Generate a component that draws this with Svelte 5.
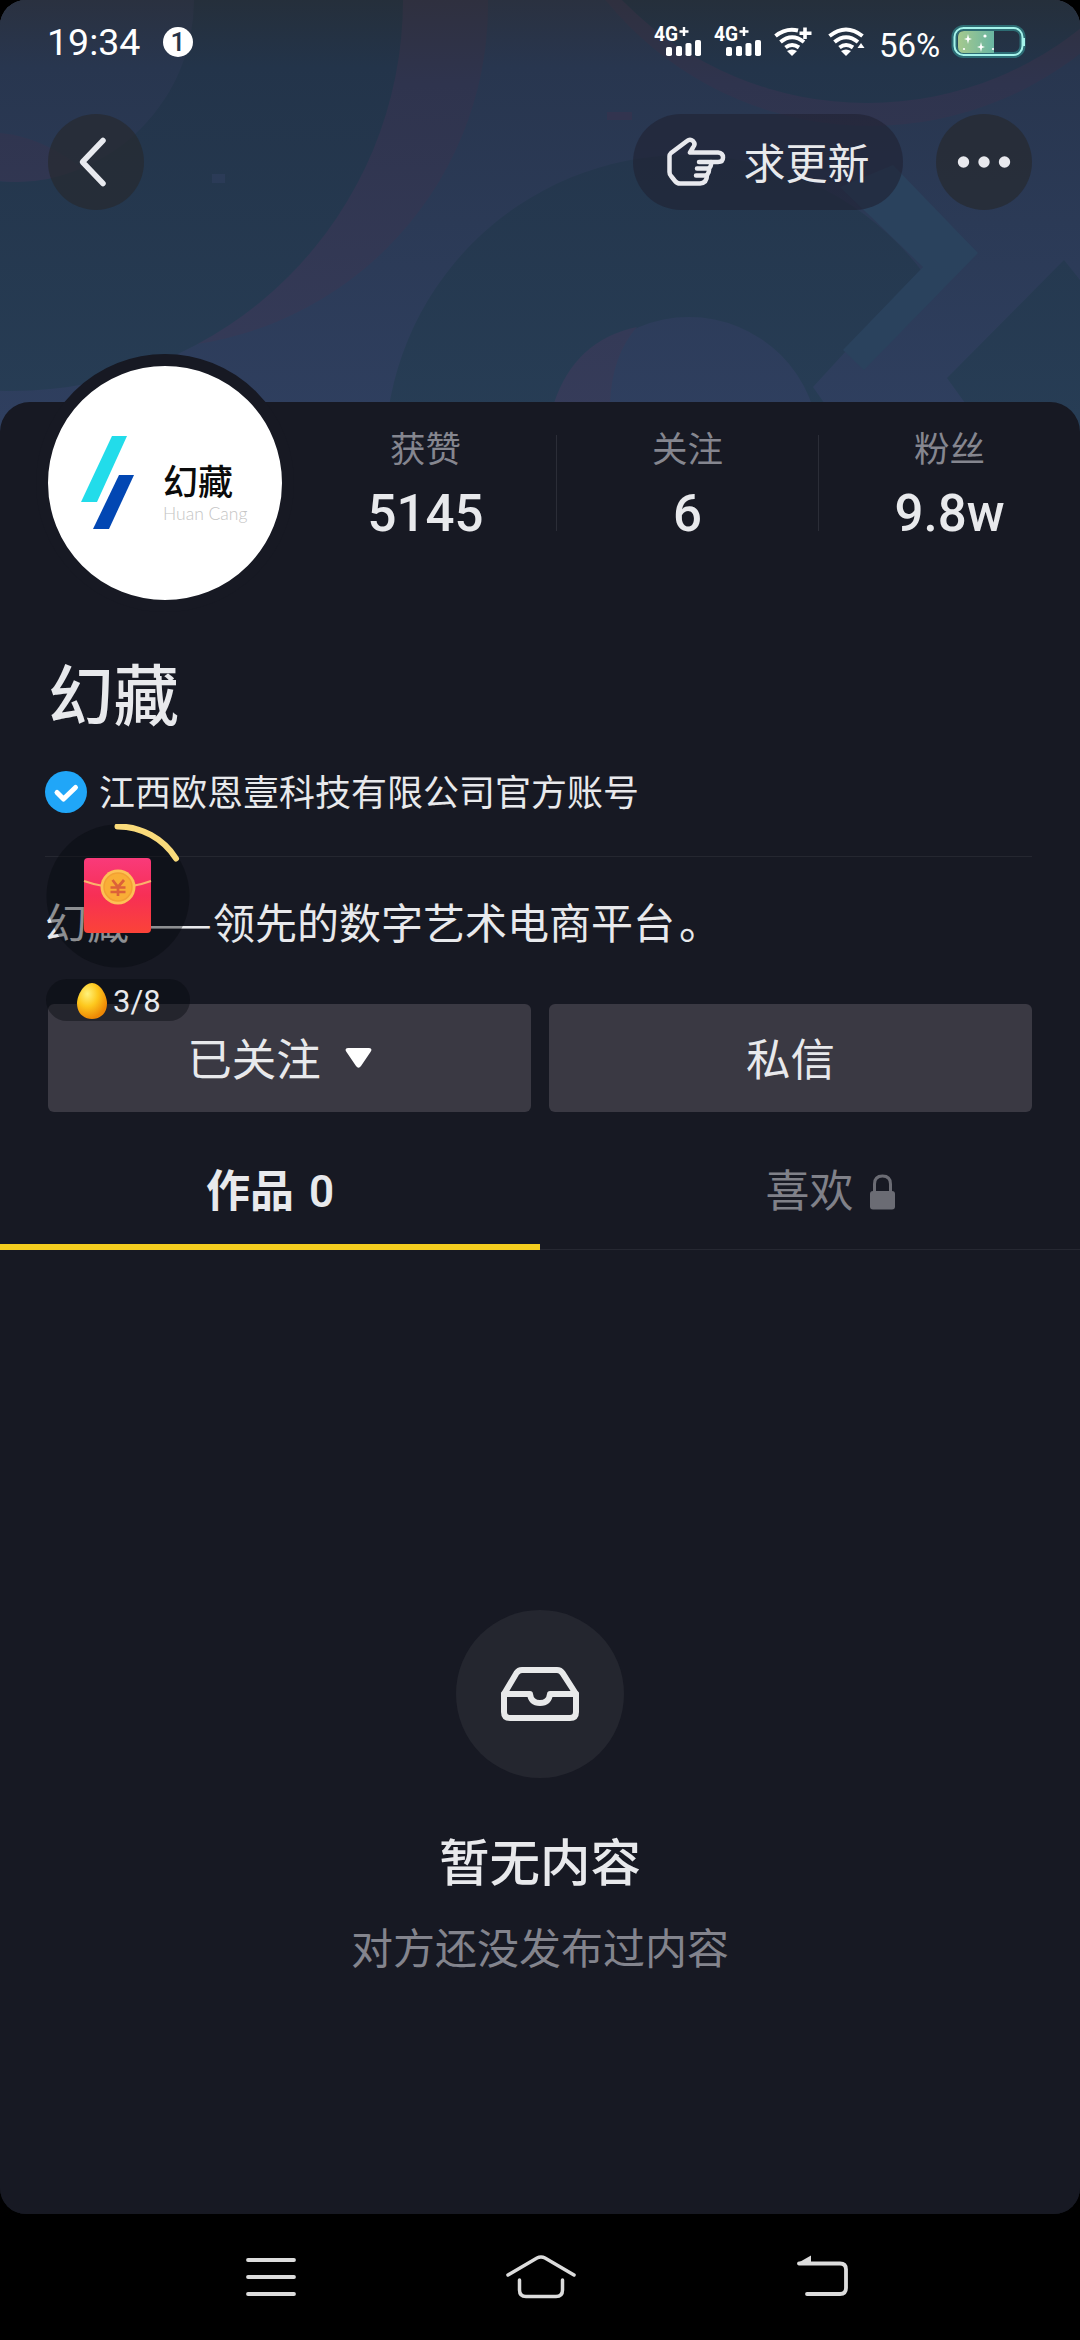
<script>
  const stats = [
    { label: '获赞', value: '5145' },
    { label: '关注', value: '6' },
    { label: '粉丝', value: '9.8w' }
  ];

  const signals = ['sim1', 'sim2'];
  const bars = [
    { x: 12, h: 9 },
    { x: 22, h: 10 },
    { x: 31.5, h: 13 },
    { x: 41, h: 16 }
  ];

  let activeTab = $state('works');
</script>

<div class="screen">
  <div class="app">
    <header class="cover">
      <svg class="cover-art" viewBox="0 0 1080 440" width="1080" height="440" aria-hidden="true">
        <defs>
          <linearGradient id="lightBlue" gradientUnits="userSpaceOnUse" x1="0" y1="0" x2="0" y2="420">
            <stop offset="0" stop-color="#2a3140" />
            <stop offset="0.16" stop-color="#28364f" />
            <stop offset="1" stop-color="#2f3f5f" />
          </linearGradient>
          <linearGradient id="deepBlue" gradientUnits="userSpaceOnUse" x1="0" y1="0" x2="0" y2="420">
            <stop offset="0" stop-color="#252f3b" />
            <stop offset="0.16" stop-color="#23344a" />
            <stop offset="1" stop-color="#273d55" />
          </linearGradient>
          <linearGradient id="plum" gradientUnits="userSpaceOnUse" x1="0" y1="0" x2="0" y2="420">
            <stop offset="0" stop-color="#2f303f" />
            <stop offset="0.2" stop-color="#2f344e" />
            <stop offset="1" stop-color="#363c5a" />
          </linearGradient>
        </defs>
        <rect width="1080" height="440" fill="url(#lightBlue)" />
        <circle cx="145" cy="5" r="343" fill="url(#plum)" />
        <circle cx="12" cy="0" r="391" fill="url(#deepBlue)" />
        <circle cx="12" cy="0" r="182" fill="url(#lightBlue)" />
        <path d="M0 133Q40 136 82 168Q40 186 0 181Z" fill="url(#plum)" />
        <circle cx="870" cy="-215" r="341" fill="url(#plum)" />
        <circle cx="867" cy="-240" r="343" fill="url(#deepBlue)" />
        <circle cx="685" cy="455" r="300" fill="url(#deepBlue)" />
        <path d="M923 267L813 387L850 440H1000V230Z" fill="url(#lightBlue)" />
        <path d="M840 187L893 165L978 253L864 370L843 350L923 267Z" fill="#2a425d" />
        <path d="M1064 260L1080 280V440H975L965 403L947 378Z" fill="url(#deepBlue)" />
        <circle cx="689" cy="447" r="130" fill="url(#lightBlue)" />
        <path d="M554 403Q575 340 637 327Q612 355 610 403Z" fill="url(#plum)" />
        <rect x="212" y="174" width="13" height="9" fill="#2b3b57" />
        <rect x="607" y="112" width="25" height="8" fill="#32344f" />
      </svg>

      <div class="status">
        <span class="time">19:34</span>
        <span class="notice">1</span>
        <div class="status-icons">
          {#each signals as sim (sim)}
            <svg class="signal" width="48" height="44" viewBox="0 -6 48 44" fill="#fff">
              <text class="net" x="0" y="15" textLength="24" lengthAdjust="spacingAndGlyphs">4G</text>
              <path d="M30 1v9M25.500 5.500h9" stroke="#fff" stroke-width="2.400" />
              {#each bars as bar}
                <rect x={bar.x} y={30 - bar.h} width="6" height={bar.h} rx="1.800" />
              {/each}
            </svg>
          {/each}
          <svg class="wifi-plus" width="39" height="30" viewBox="0 0 39 30" fill="none" stroke="#fff" stroke-width="4">
            <path d="M1.500 9Q12 0.500 24 3.500" />
            <path d="M6.500 15Q18 5.500 30 15" />
            <path d="M11.500 20.500Q18 15.500 25 20.500" />
            <path d="M13 24Q18 21 23 24L18 29Z" fill="#fff" stroke="none" />
            <path d="M31 0.500V12M25.500 6.200H37.500" stroke-width="3.600" />
          </svg>
          <svg class="wifi" width="37" height="30" viewBox="0 0 37 30" fill="none" stroke="#fff" stroke-width="4">
            <path d="M1.500 9Q18 -4 34.500 9" />
            <path d="M6.500 15Q18 5.500 30 15" />
            <path d="M11.500 20.500Q18 15.500 25 20.500" />
            <path d="M13 24Q18 21 23 24L18 29Z" fill="#fff" stroke="none" />
            <path d="M33 16L36.500 21H29.500Z" fill="#fff" stroke="none" />
          </svg>
          <span class="percent">56%</span>
          <svg class="battery" width="78" height="38" viewBox="0 0 78 38">
            <defs>
              <linearGradient id="charge" x1="0" x2="1">
                <stop offset="0" stop-color="#a5c98e" />
                <stop offset="1" stop-color="#69b5a2" />
              </linearGradient>
            </defs>
            <rect x="4.500" y="5" width="68" height="27" rx="9" fill="none" stroke="#35a5a3" stroke-opacity="0.5" stroke-width="6" />
            <rect x="4.500" y="5" width="68" height="27" rx="9" fill="none" stroke="#a5f3ea" stroke-width="2" />
            <path d="M14 8H44V30H14Q8 30 8 24V14Q8 8 14 8Z" fill="url(#charge)" />
            <path d="M18 11L19 15L22 16L19 17L18 21L17 17L14 16L17 15ZM31 19L32 23L35 24L32 25L31 29L30 25L27 24L30 23Z" fill="#fff" />
            <circle cx="35" cy="13" r="1.600" fill="#fff" />
            <circle cx="14" cy="26" r="1.100" fill="#fff" />
            <circle cx="43" cy="26" r="1.100" fill="#fff" />
            <path d="M73.500 15V23" stroke="#a5f3ea" stroke-width="3" />
          </svg>
        </div>
      </div>

      <div class="actions">
        <button class="round" aria-label="返回">
          <svg width="30" height="52" viewBox="0 0 30 52" fill="none" stroke="#e8eaef" stroke-width="5.500" stroke-linecap="round" stroke-linejoin="round">
            <path d="M25 4.500L4.500 26L25 47.500" />
          </svg>
        </button>
        <button class="urge">
          <svg width="60" height="50" viewBox="0 0 60 50" fill="none" stroke="#e8e9ee" stroke-width="4.500" stroke-linecap="round" stroke-linejoin="round">
            <path d="M3.500 19Q3.500 17.500 5 16L21 4Q24 1.500 27 4Q30 7 27 10.500L24 15.500H52Q57 16 57 20.500Q57 25 52 25H45Q46 28 43 31.500Q43.500 35 41 38Q41 46 34 46.500H14Q11 46.500 9 44L5 39Q3.500 37.500 3.500 35Z" />
            <path d="M45 25H33M43 31.500H31M41 38.500H30" />
          </svg>
          <span>求更新</span>
        </button>
        <button class="round" aria-label="更多">
          <svg width="54" height="12" viewBox="0 0 54 12" fill="#e8e9ee">
            <circle cx="6.500" cy="6" r="5.700" />
            <circle cx="27" cy="6" r="5.700" />
            <circle cx="47.500" cy="6" r="5.700" />
          </svg>
        </button>
      </div>
    </header>

    <main class="panel">
      <section class="summary">
        <div class="avatar">
          <svg width="54" height="94" viewBox="0 0 54 94">
            <path d="M31 0H46L16 66H0Z" fill="#22dcea" />
            <path d="M38 39H53L28 93H12Z" fill="#0247b3" />
          </svg>
          <div class="brand">
            <strong>幻藏</strong>
            <small>Huan Cang</small>
          </div>
        </div>
        <div class="stats">
          {#each stats as stat}
            <div class="stat">
              <span class="stat-label">{stat.label}</span>
              <span class="stat-value">{stat.value}</span>
            </div>
          {/each}
        </div>
      </section>

      <section class="profile">
        <h1>幻藏</h1>
        <div class="verified">
          <svg width="42" height="42" viewBox="0 0 42 42">
            <circle cx="21" cy="21" r="21" fill="#20a6f8" />
            <path d="M12 21.500L18.500 28L30.500 16.500" fill="none" stroke="#fff" stroke-width="5" stroke-linecap="round" stroke-linejoin="round" />
          </svg>
          <span>江西欧恩壹科技有限公司官方账号</span>
        </div>
        <p class="bio">幻藏<span class="dash">——</span>领先的数字艺术电商平台<span class="stop">。</span></p>
        <div class="buttons">
          <button class="following">
            <span>已关注</span>
            <svg width="27" height="21" viewBox="0 0 27 21" fill="#fff">
              <path d="M3 0H24Q28 0.500 25.500 4L16 18Q13.500 21.500 11 18L1.500 4Q-1 0.500 3 0Z" />
            </svg>
          </button>
          <button><span>私信</span></button>
        </div>
      </section>

      <nav class="tabs">
        <button class:active={activeTab === 'works'} onclick={() => (activeTab = 'works')}>作品 0</button>
        <button class:active={activeTab === 'likes'} onclick={() => (activeTab = 'likes')}>
          喜欢
          <svg width="25" height="36" viewBox="0 0 25 36">
            <path d="M4.500 19V10Q4.500 2 12.500 2Q20.500 2 20.500 10V19" fill="none" stroke="#6b6c74" stroke-width="3" />
            <rect y="17" width="25" height="18.500" rx="3" fill="#6b6c74" />
          </svg>
        </button>
      </nav>

      <section class="empty">
        <div class="empty-icon">
          <svg width="80" height="56" viewBox="0 0 80 56" fill="none" stroke="#e8e9ea" stroke-width="6" stroke-linejoin="round" stroke-linecap="round">
            <path d="M4 28L16.500 7Q18.500 4 22 4H57Q60.500 4 62.500 7L76 28V46Q76 52 70 52H10Q4 52 4 46Z" />
            <path d="M4 28H30Q31 37 40 37Q49 37 50 28H76" />
          </svg>
        </div>
        <h2>暂无内容</h2>
        <p>对方还没发布过内容</p>
      </section>
    </main>

    <!-- floating reward timer -->
    <aside class="reward">
      <svg width="144" height="144" viewBox="0 0 144 144">
        <defs>
          <linearGradient id="packet" x1="0" y1="0" x2="0" y2="1">
            <stop offset="0" stop-color="#f93a7a" />
            <stop offset="0.5" stop-color="#f72f55" />
            <stop offset="1" stop-color="#fb4338" />
          </linearGradient>
        </defs>
        <circle cx="72" cy="72" r="71.500" fill="#05080c" fill-opacity="0.4" />
        <path d="M71.500 2.500A69 69 0 0 1 130 34.500" fill="none" stroke="#fadb7b" stroke-width="6" stroke-linecap="round" />
        <rect x="38" y="34" width="67" height="75" rx="4" fill="url(#packet)" />
        <path d="M38 57Q72 69 105 57" fill="none" stroke="#fbb16c" stroke-width="2" />
        <circle cx="72" cy="63" r="17.500" fill="#fdc155" />
        <circle cx="72" cy="63" r="14" fill="#f9ae36" stroke="#f3a134" stroke-width="1.500" />
        <path d="M66.500 56L72 63L78 56M72 63V72M64.500 63.500H79.500M64.500 68H79.500" fill="none" stroke="#dc6239" stroke-width="2.700" />
      </svg>
      <div class="reward-count">
        <svg width="32" height="38" viewBox="0 0 32 38">
          <defs>
            <radialGradient id="egg" cx="0.350" cy="0.300" r="0.700">
              <stop offset="0" stop-color="#fff27a" />
              <stop offset="0.500" stop-color="#fdc81e" />
              <stop offset="1" stop-color="#ee8805" />
            </radialGradient>
          </defs>
          <path d="M16 1C24 1 31 13 31 21.500C31 31 24.500 37 16 37C7.500 37 1 31 1 21.500C1 13 8 1 16 1Z" fill="url(#egg)" />
        </svg>
        <span>3/8</span>
      </div>
    </aside>
  </div>

  <footer class="system-nav">
    <svg width="50" height="44" viewBox="0 0 50 44" fill="none" stroke="#dcdcdc" stroke-width="3.800" stroke-linecap="round">
      <path d="M2 5H48M2 22H48M2 39H48" />
    </svg>
    <svg width="70" height="44" viewBox="0 0 70 44" fill="none" stroke="#dcdcdc" stroke-width="3.500" stroke-linecap="round">
      <path d="M2 20L31 3Q35 1 39 3L68 20" />
      <path d="M13.500 25V35Q13.500 41.500 20 41.500H50Q56.500 41.500 56.500 35V25" />
    </svg>
    <svg width="52" height="44" viewBox="0 0 52 44" fill="none" stroke="#dcdcdc" stroke-width="3.800" stroke-linecap="round">
      <path d="M2 8.500H43Q49 8.500 49 14.500V33Q49 39 43 39H10" />
      <path d="M0 8.500L14 0.500V9Z" fill="#dcdcdc" stroke="none" />
    </svg>
  </footer>
</div>

<style>
  :global(body) {
    background: #000;
  }

  .screen {
    display: flex;
    flex-direction: column;
    width: 1080px;
    height: 2340px;
    overflow: hidden;
    background: #000;
    color: #e8e9ec;
    font-family: Roboto, "Noto Sans CJK SC", sans-serif;
  }

  .app {
    position: relative;
    display: flex;
    flex-direction: column;
    height: 2214px;
    overflow: hidden;
    border-radius: 26px;
    background: #171923;
  }

  button {
    display: flex;
    align-items: center;
    justify-content: center;
    margin: 0;
    padding: 0;
    border: 0;
    color: inherit;
    font: inherit;
  }

  svg {
    display: block;
    flex: none;
  }

  .cover {
    position: relative;
    height: 402px;
  }

  .cover-art {
    position: absolute;
    top: 0;
    left: 0;
  }

  .status {
    position: relative;
    display: flex;
    align-items: center;
    height: 84px;
    padding: 0 52px 0 47px;
    color: #fff;
  }

  .time {
    width: 116px;
    font-size: 37.5px;
    line-height: 84px;
  }

  .notice {
    width: 30px;
    height: 30px;
    border-radius: 50%;
    background: #fff;
    color: #263348;
    font-size: 26px;
    font-weight: 500;
    line-height: 31px;
    text-align: center;
  }

  .status-icons {
    display: flex;
    align-items: center;
    margin-left: auto;
  }

  .signal {
    margin-right: 12px;
  }

  .net {
    font-family: Roboto, sans-serif;
    font-size: 20px;
    font-weight: 700;
  }

  .wifi-plus {
    margin-right: 15px;
  }

  .wifi {
    margin-right: 14px;
  }

  .percent {
    width: 71px;
    padding-top: 8px;
    font-size: 33px;
    line-height: 38px;
  }

  .actions {
    position: relative;
    display: flex;
    height: 96px;
    margin-top: 30px;
    padding: 0 48px;
  }

  .round {
    width: 96px;
    border-radius: 50%;
    background: rgba(39, 42, 47, 0.7);
  }

  .round:first-child svg {
    margin-right: 6px;
  }

  .urge {
    gap: 17px;
    width: 270px;
    margin: 0 33px 0 auto;
    border-radius: 48px;
    background: rgba(31, 33, 50, 0.6);
    font-size: 42px;
  }

  .urge span {
    margin-top: -3px;
  }

  .panel {
    position: relative;
    display: flex;
    flex: 1;
    flex-direction: column;
    border-radius: 30px 30px 0 0;
    background: #171923;
  }

  .summary {
    display: flex;
    height: 210px;
  }

  .avatar {
    display: flex;
    flex: none;
    align-items: center;
    box-sizing: border-box;
    width: 258px;
    height: 258px;
    margin: -48px 0 0 36px;
    padding: 0 0 0 33px;
    border: 12px solid #171923;
    border-radius: 50%;
    background: #fff;
    color: #0b0b0b;
  }

  .brand {
    display: flex;
    flex-direction: column;
    margin: 23px 0 0 28px;
    white-space: nowrap;
  }

  .brand strong {
    font-size: 35px;
    font-weight: 500;
    line-height: 38px;
  }

  .brand small {
    color: #c4c4c4;
    font-family: Lato, sans-serif;
    font-size: 17.5px;
    font-weight: 300;
    line-height: 22px;
  }

  .stats {
    display: flex;
    flex: 1;
    height: 96px;
    margin-top: 33px;
  }

  .stat {
    display: flex;
    flex: 1;
    flex-direction: column;
    align-items: center;
    border-left: 1px solid #2b2d37;
  }

  .stat:first-child {
    border-color: transparent;
  }

  .stat-label {
    margin-top: 2px;
    color: #85868f;
    font-size: 35.5px;
    line-height: 26px;
  }

  .stat-value {
    margin-top: 21px;
    font-size: 51px;
    font-weight: 500;
    line-height: 60px;
  }

  .profile {
    padding: 0 48px;
  }

  h1 {
    margin: 46px 0 0;
    font-size: 65.5px;
    font-weight: 500;
    line-height: 80px;
  }

  .verified {
    display: flex;
    align-items: center;
    gap: 12px;
    height: 42px;
    margin-left: -3px;
    padding: 33px 0 43px;
    border-bottom: 1px solid #252730;
    font-size: 36px;
  }

  .verified span {
    margin-top: -4px;
  }

  .bio {
    height: 84px;
    margin: 22px 0 0 -3px;
    font-family: "Noto Sans CJK SC", sans-serif;
    font-size: 42px;
    line-height: 84px;
    white-space: nowrap;
  }

  .dash {
    display: inline-block;
    width: 84px;
    transform: scaleX(1.18);
    transform-origin: 0 50%;
  }

  .stop {
    margin-left: 4px;
  }

  .buttons {
    display: grid;
    grid-template-columns: 1fr 1fr;
    gap: 18px;
    height: 108px;
    margin-top: 41px;
  }

  .buttons button {
    gap: 24px;
    border-radius: 6px;
    background: #3a3943;
    font-size: 44.5px;
  }

  .buttons span {
    margin-top: -4px;
  }

  .buttons .following {
    padding-right: 20px;
  }

  .tabs {
    display: flex;
    height: 138px;
  }

  .tabs button {
    gap: 16px;
    box-sizing: border-box;
    width: 540px;
    padding: 23px 0 0 40px;
    border-bottom: 1px solid #262832;
    background: none;
    color: #808189;
    font-size: 44px;
    line-height: 56px;
  }

  .tabs button.active {
    padding-left: 0;
    padding-top: 28px;
    border-bottom: 6px solid #f5ce1f;
    color: #e8e9ec;
    font-weight: 600;
    word-spacing: 4px;
  }

  .empty {
    display: flex;
    flex-direction: column;
    align-items: center;
    margin-top: 360px;
  }

  .empty-icon {
    display: flex;
    align-items: center;
    justify-content: center;
    width: 168px;
    height: 168px;
    border-radius: 50%;
    background: #24262f;
  }

  h2 {
    margin: 51px 0 0;
    font-size: 50.5px;
    font-weight: 500;
    line-height: 70px;
  }

  .empty p {
    margin: 19px 0 0;
    color: #83848d;
    font-size: 42px;
    line-height: 64px;
  }

  .reward {
    position: absolute;
    top: 824px;
    left: 46px;
    width: 144px;
  }

  .reward-count {
    display: flex;
    align-items: center;
    gap: 5px;
    height: 42px;
    margin-top: 11px;
    padding: 2px 0 0 30px;
    border-radius: 21px;
    background: rgba(5, 8, 12, 0.4);
    font-size: 31px;
    box-sizing: border-box;
  }

  .system-nav {
    display: flex;
    align-items: center;
    justify-content: space-between;
    flex: 1;
    padding: 0 231px 0 246px;
  }

  .system-nav svg:nth-child(2) {
    margin-right: 11px;
  }
</style>
